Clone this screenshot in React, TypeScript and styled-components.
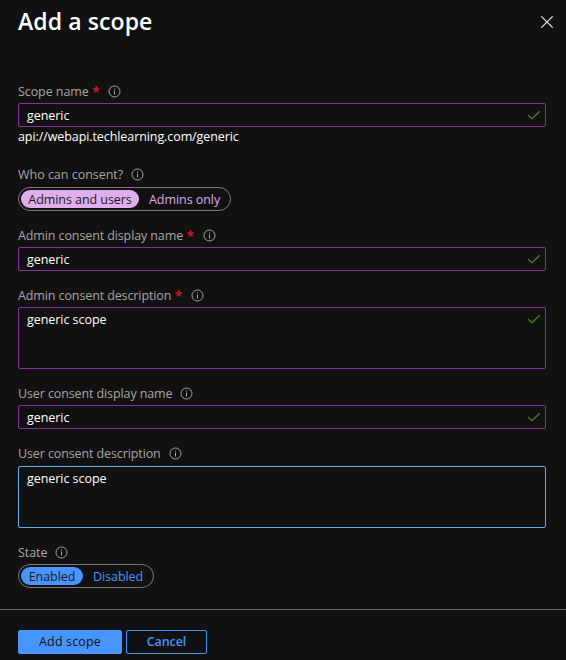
import React from "react";
import styled, { createGlobalStyle } from "styled-components";

const GlobalStyle = createGlobalStyle`
  * { box-sizing: border-box; }
  body { margin: 0; background: #111111; }
  button { font: inherit; margin: 0; cursor: pointer; }
`;

const Panel = styled.div`
  width: 566px;
  height: 660px;
  display: flex;
  flex-direction: column;
  background: #111111;
  color: #ffffff;
  font-family: "Open Sans", "Noto Sans", sans-serif;
  font-size: 12.5px;
  line-height: 18px;
  overflow: hidden;
`;

const Header = styled.header`
  display: flex;
  justify-content: space-between;
  height: 79px;
  padding: 5px 12px 0 18px;
`;

const Title = styled.h1`
  margin: 0;
  font-size: 23px;
  letter-spacing: 0.1px;
  line-height: 32px;
  font-weight: 600;
`;

const CloseButton = styled.button`
  display: flex;
  width: 14px;
  height: 14px;
  margin-top: 10px;
  padding: 0;
  border: 0;
  background: none;
`;

const Form = styled.form`
  flex: 1;
  display: flex;
  flex-direction: column;
  padding: 0 20px 0 18px;
`;

const Field = styled.div<{ $after: number }>`
  display: flex;
  flex-direction: column;
  margin-bottom: ${(p) => p.$after}px;
`;

const Label = styled.div<{ $gap: number }>`
  display: flex;
  align-items: center;
  height: 24px;
  margin-bottom: ${(p) => p.$gap}px;
  color: #a8a6a4;
`;

const LabelText = styled.span<{ $track: number }>`
  padding-top: 2px;
  letter-spacing: ${(p) => p.$track}px;
  white-space: nowrap;
`;

const Required = styled.span`
  width: 8px;
  margin-left: 3.5px;
  padding-top: 1px;
  color: #e81123;
  font-size: 13.5px;
  font-weight: 600;
`;

const InfoIcon = styled.svg`
  margin-left: 8px;
  flex: none;
`;

const InputBox = styled.div<{ $tall?: boolean; $focus?: boolean }>`
  display: flex;
  justify-content: space-between;
  height: ${(p) => (p.$tall ? 62 : 24)}px;
  padding: 3px 4px 0 8px;
  border: 1px solid ${(p) => (p.$focus ? "#5caef2" : "#892da5")};
  border-radius: 2px;
`;

const Check = styled.svg`
  margin-top: 3px;
`;

const Uri = styled.div`
  height: 20px;
  padding-top: 1px;
  letter-spacing: -0.085px;
  white-space: nowrap;
`;

const Toggle = styled.div<{ $width: number }>`
  display: flex;
  align-items: center;
  width: ${(p) => p.$width}px;
  height: 24px;
  padding: 0 2px;
  border: 1px solid #7b7977;
  border-radius: 12px;
`;

const Option = styled.button<{ $color: string; $on?: boolean; $width?: number }>`
  flex: none;
  width: ${(p) => (p.$width ? `${p.$width}px` : "auto")};
  height: 18px;
  padding: 1px ${(p) => (p.$on ? 0 : 10)}px 0;
  border: 0;
  border-radius: 9px;
  line-height: 17px;
  letter-spacing: -0.06px;
  white-space: nowrap;
  background: ${(p) => (p.$on ? p.$color : "none")};
  color: ${(p) => (p.$on ? "#1b1a19" : p.$color)};
`;

const Footer = styled.footer`
  display: flex;
  gap: 4px;
  height: 51px;
  padding: 20px 18px 0;
  border-top: 1px solid #6b6967;
`;

const ActionButton = styled.button<{ $primary?: boolean }>`
  width: ${(p) => (p.$primary ? 104 : 81)}px;
  height: 24px;
  padding: 0;
  border: 1px solid #4894fe;
  border-radius: 2px;
  line-height: 20px;
  letter-spacing: ${(p) => (p.$primary ? 0.15 : -0.1)}px;
  font-weight: ${(p) => (p.$primary ? 500 : 600)};
  background: ${(p) => (p.$primary ? "#4894fe" : "transparent")};
  color: ${(p) => (p.$primary ? "#111111" : "#4894fe")};
`;

const Info = () => (
  <InfoIcon width="13" height="13" viewBox="0 0 13 13" fill="none" stroke="#a8a6a4">
    <circle cx="6.5" cy="6.5" r="5.5" />
    <path d="M6.5 5.5V9.5M6.5 3.5V4.5" />
  </InfoIcon>
);

const Valid = () => (
  <Check width="14" height="12" viewBox="0 0 14 12" fill="none" stroke="#4c8a0c" strokeWidth="1.2">
    <path d="M1.2 5.3L5 8.7L12.8 1.2" />
  </Check>
);

interface FieldLabelProps {
  text: string;
  track?: number;
  gap?: number;
  required?: boolean;
}

const FieldLabel = ({ text, track = -0.11, gap = 0, required }: FieldLabelProps) => (
  <Label $gap={gap}>
    <LabelText $track={track}>{text}</LabelText>
    {required && <Required>*</Required>}
    <Info />
  </Label>
);

const Value = styled.span`
  white-space: nowrap;
  letter-spacing: -0.05px;
`;

export default function App() {
  return (
    <>
      <GlobalStyle />
      <Panel>
        <Header>
          <Title>Add a scope</Title>
          <CloseButton type="button" aria-label="Close">
            <svg width="14" height="14" viewBox="0 0 14 14" stroke="#f3f2f1" strokeWidth="1.1">
              <path d="M1.3 1.3L12.7 12.7M12.7 1.3L1.3 12.7" />
            </svg>
          </CloseButton>
        </Header>
        <Form>
          <Field $after={15}>
            <FieldLabel text="Scope name" track={-0.08} required />
            <InputBox><Value>generic</Value><Valid /></InputBox>
            <Uri>api://webapi.techlearning.com/generic</Uri>
          </Field>
          <Field $after={12}>
            <FieldLabel text="Who can consent?" track={-0.02} gap={1} />
            <Toggle $width={213}>
              <Option type="button" $on $color="#dfaeec" $width={118}>Admins and users</Option>
              <Option type="button" $color="#dfaeec">Admins only</Option>
            </Toggle>
          </Field>
          <Field $after={12}>
            <FieldLabel text="Admin consent display name" required />
            <InputBox><Value>generic</Value><Valid /></InputBox>
          </Field>
          <Field $after={12}>
            <FieldLabel text="Admin consent description" required />
            <InputBox $tall><Value>generic scope</Value><Valid /></InputBox>
          </Field>
          <Field $after={12}>
            <FieldLabel text="User consent display name" />
            <InputBox><Value>generic</Value><Valid /></InputBox>
          </Field>
          <Field $after={12}>
            <FieldLabel text="User consent description" gap={1} />
            <InputBox $tall $focus><Value>generic scope</Value></InputBox>
          </Field>
          <Field $after={0}>
            <FieldLabel text="State" track={-0.05} />
            <Toggle $width={136}>
              <Option type="button" $on $color="#4894fe" $width={62}>Enabled</Option>
              <Option type="button" $color="#4894fe">Disabled</Option>
            </Toggle>
          </Field>
        </Form>
        <Footer>
          <ActionButton type="button" $primary>Add scope</ActionButton>
          <ActionButton type="button">Cancel</ActionButton>
        </Footer>
      </Panel>
    </>
  );
}
